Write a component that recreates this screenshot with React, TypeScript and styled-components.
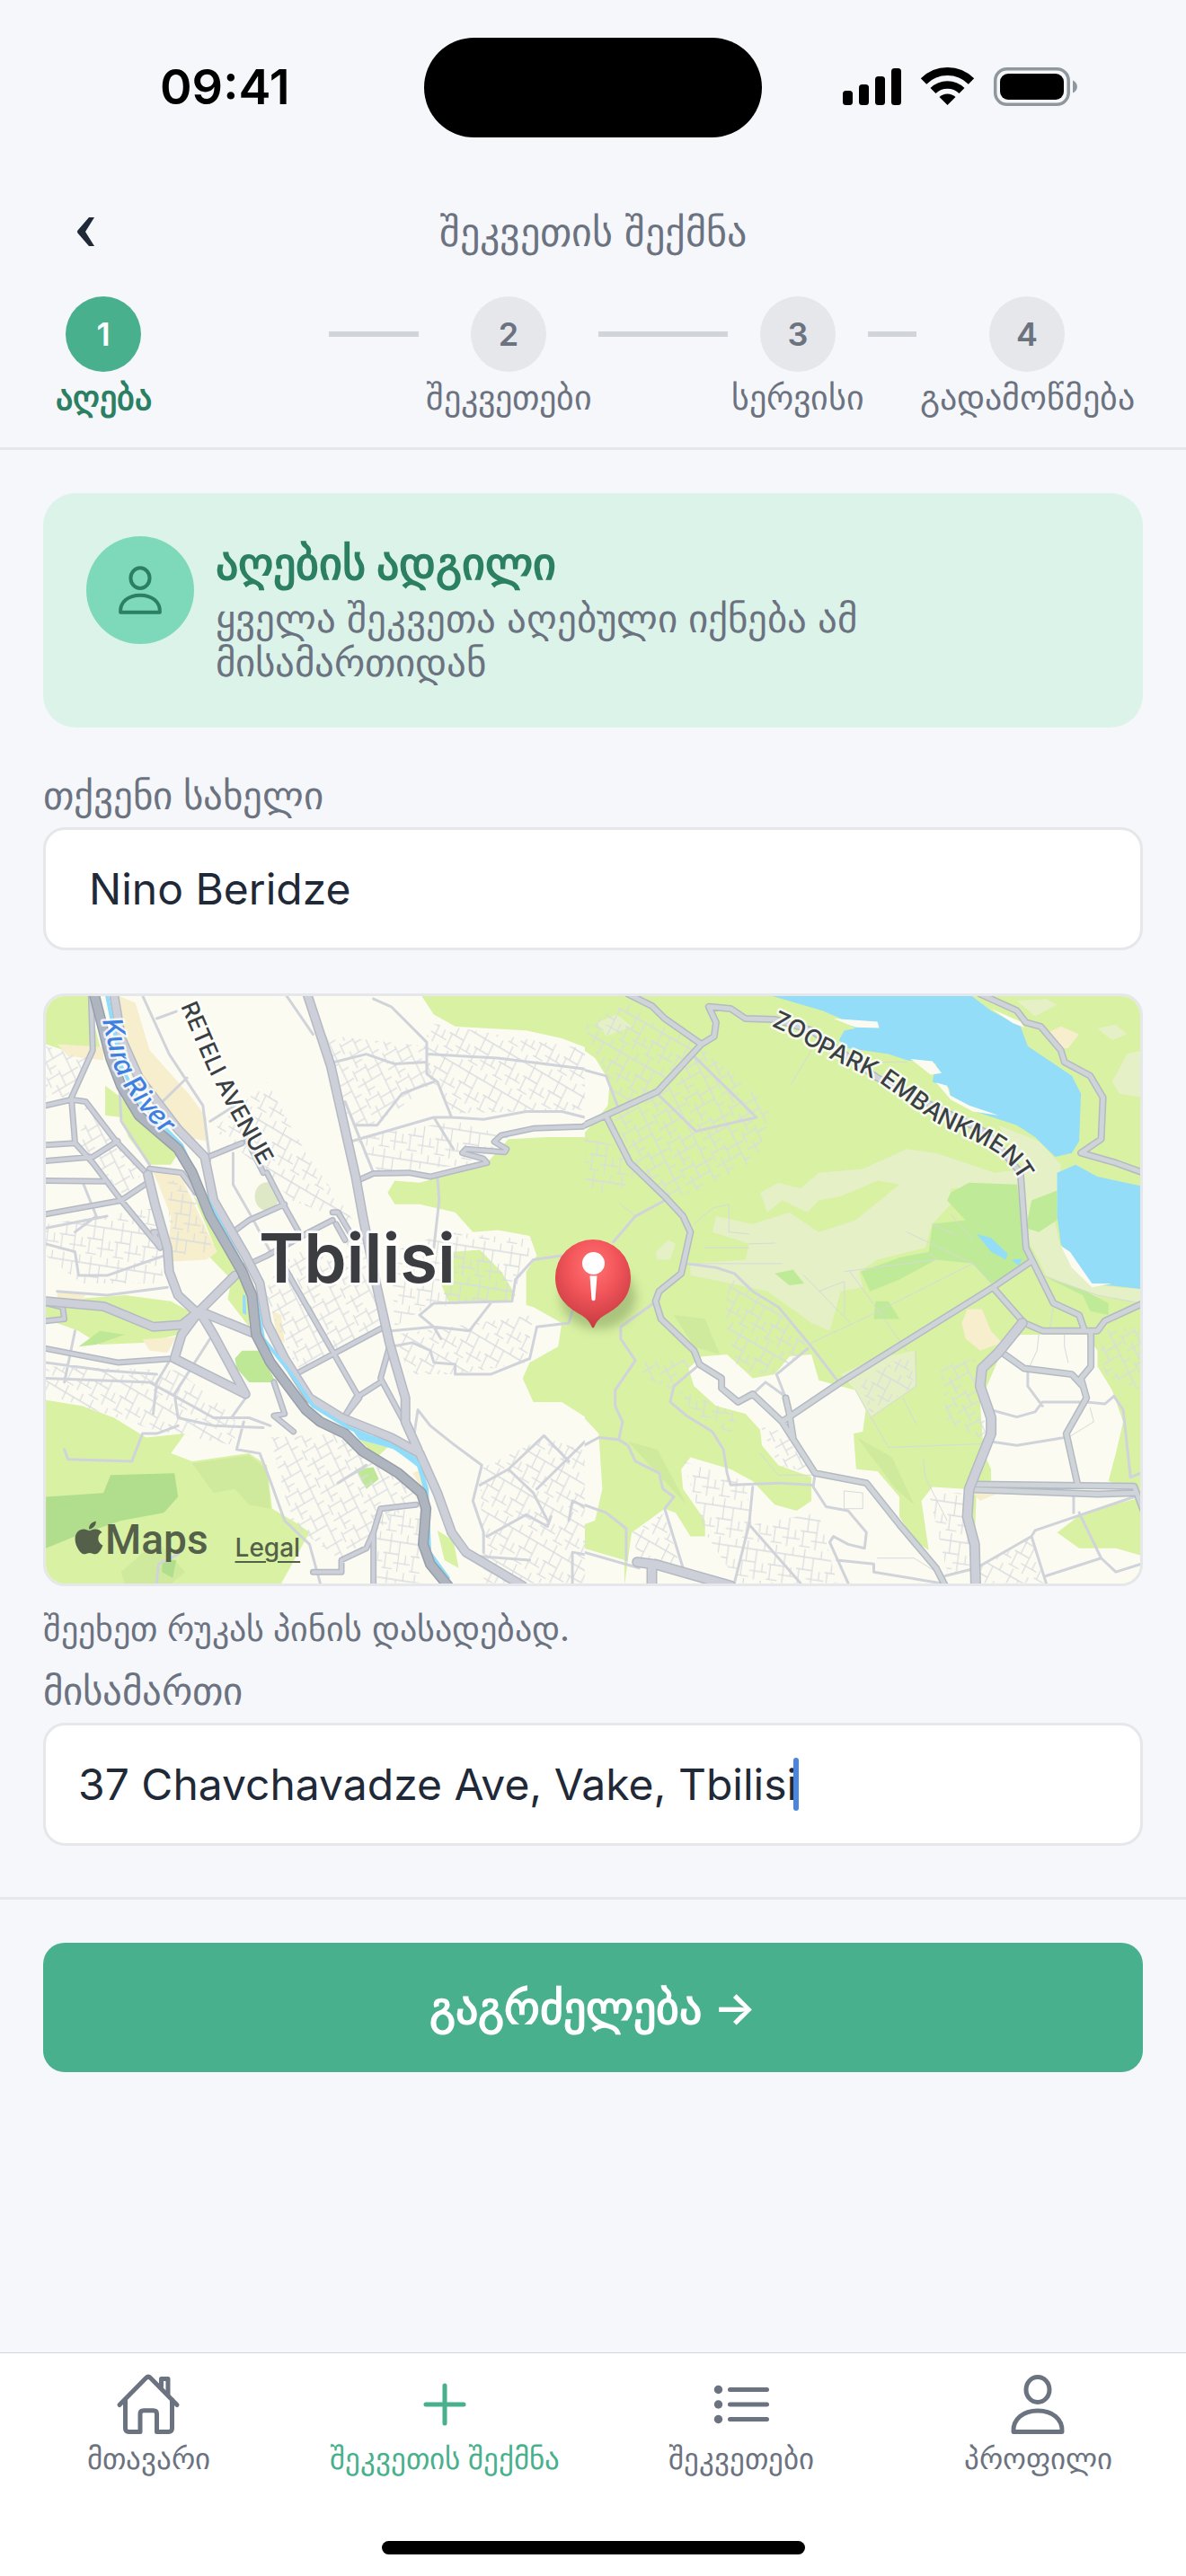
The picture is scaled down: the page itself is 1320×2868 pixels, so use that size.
import React, { useState } from 'react';
import styled, { createGlobalStyle } from 'styled-components';
import { FaApple } from 'react-icons/fa';

const color = {
  page: '#f6f7fb',
  ink: '#1f2937',
  muted: '#6b7280',
  line: '#e5e7eb',
  rail: '#d1d5d9',
  green: '#48b08c',
  greenDark: '#2b7f62',
  greenSoft: '#dcf3ea',
  greenMid: '#7dd9b9',
  white: '#ffffff',
};

const GlobalStyle = createGlobalStyle`
  *, *::before, *::after { box-sizing: border-box; }
  body {
    margin: 0;
    background: ${color.page};
    color: ${color.ink};
    font-family: Inter, sans-serif;
  }
  button, input { font-family: inherit; }
`;

const Screen = styled.div`
  display: flex;
  flex-direction: column;
  min-height: 100vh;
`;

/* ---------- status bar ---------- */

const StatusBar = styled.div`
  display: grid;
  grid-template-columns: 1fr 376px 1fr;
  align-items: center;
  height: 194px;
  color: #000;
`;

const Clock = styled.time`
  margin-left: 178px;
  font-size: 54px;
  font-weight: 600;
  line-height: 64px;
`;

const Island = styled.div`
  height: 111px;
  border-radius: 56px;
  background: #000;
`;

const StatusIcons = styled.svg`
  justify-self: end;
  margin-right: 120px;
`;

/* ---------- header ---------- */

const TitleBar = styled.header`
  display: grid;
  grid-template-columns: 96px 1fr 96px;
  align-items: center;
  height: 128px;
  padding: 0 48px;
`;

const BackButton = styled.button`
  display: flex;
  align-items: center;
  justify-content: center;
  height: 96px;
  padding: 0;
  border: 0;
  background: none;
  color: ${color.ink};
`;

const Title = styled.h1`
  margin: 0;
  text-align: center;
  font-size: 44px;
  font-weight: 400;
  line-height: 54px;
  color: ${color.muted};
`;

const Steps = styled.ol`
  display: flex;
  align-items: flex-start;
  margin: 0;
  padding: 8px 54px 32px 60px;
  border-bottom: 3px solid ${color.line};
  list-style: none;
`;

const StepItem = styled.li<{ $basis: number }>`
  display: flex;
  flex: 0 1 ${p => p.$basis}px;
`;

const StepBody = styled.div<{ $wide: boolean }>`
  display: flex;
  flex-direction: column;
  align-items: center;
  gap: 4px;
  width: ${p => (p.$wide ? '100%' : '110px')};
`;

const StepDot = styled.span<{ $active: boolean }>`
  display: flex;
  align-items: center;
  justify-content: center;
  width: 84px;
  height: 84px;
  border-radius: 50%;
  background: ${p => (p.$active ? color.green : color.line)};
  color: ${p => (p.$active ? color.white : color.muted)};
  font-size: 36px;
  font-weight: 600;
`;

const StepLabel = styled.span<{ $active: boolean }>`
  font-size: 38px;
  font-weight: ${p => (p.$active ? 700 : 400)};
  line-height: 48px;
  white-space: nowrap;
  color: ${p => (p.$active ? color.greenDark : color.muted)};
`;

const StepRail = styled.li<{ $grow: number }>`
  flex: ${p => p.$grow} 1 0;
  height: 6px;
  margin-top: 39px;
  background: ${color.rail};
`;

/* ---------- form ---------- */

const Form = styled.main`
  display: flex;
  flex-direction: column;
  padding: 48px 48px 57px;
`;

const InfoCard = styled.section`
  display: flex;
  align-items: flex-start;
  gap: 24px;
  padding: 48px;
  border-radius: 36px;
  background: ${color.greenSoft};
`;

const Avatar = styled.div`
  display: flex;
  flex: none;
  align-items: center;
  justify-content: center;
  width: 120px;
  height: 120px;
  border-radius: 50%;
  background: ${color.greenMid};
  color: ${color.greenDark};
`;

const InfoText = styled.div`
  display: flex;
  flex-direction: column;
  gap: 7px;
  max-width: 760px;
`;

const InfoTitle = styled.h2`
  margin: 0;
  font-size: 50px;
  font-weight: 700;
  line-height: 60px;
  color: ${color.greenDark};
`;

const InfoBody = styled.p`
  margin: 0;
  font-size: 43px;
  line-height: 49px;
  color: ${color.muted};
`;

const Field = styled.div<{ $gap: number }>`
  display: flex;
  flex-direction: column;
  gap: 9px;
  margin-top: ${p => p.$gap}px;
`;

const FieldLabel = styled.label`
  font-size: 43px;
  line-height: 54px;
  color: ${color.muted};
`;

const InputBox = styled.div<{ $pad: number }>`
  display: flex;
  align-items: center;
  height: 137px;
  padding: 0 ${p => p.$pad}px;
  border: 3px solid ${color.line};
  border-radius: 24px;
  background: ${color.white};
`;

const TextInput = styled.input`
  min-width: 0;
  max-width: 100%;
  field-sizing: content;
  padding: 0;
  border: 0;
  outline: 0;
  background: none;
  color: ${color.ink};
  font-size: 48px;
  line-height: 60px;
`;

const Caret = styled.span`
  flex: none;
  width: 6px;
  height: 59px;
  margin-left: -4px;
  border-radius: 3px;
  background: #4a86e0;
`;

const Hint = styled.p`
  margin: 23px 0 0;
  font-size: 38px;
  line-height: 48px;
  color: ${color.muted};
`;

/* ---------- map ---------- */

const MapFrame = styled.div`
  position: relative;
  height: 660px;
  margin-top: 48px;
  overflow: hidden;
  border: 3px solid ${color.line};
  border-radius: 24px;
  background: #fcfbf2;
`;

const MapCanvas = styled.svg`
  display: block;
  width: 100%;
  height: 100%;
`;

const MapCredit = styled.div`
  position: absolute;
  left: 30px;
  bottom: 22px;
  display: flex;
  align-items: baseline;
  color: #55604a;
`;

const MapBrand = styled.span`
  display: flex;
  align-items: center;
  font-family: Roboto, sans-serif;
  font-size: 46px;
  font-weight: 500;
  line-height: 54px;

  svg {
    width: 36px;
    margin-bottom: 4px;
  }
`;

const MapLegal = styled.a`
  margin-left: 30px;
  color: inherit;
  font-size: 28px;
  font-weight: 500;
  text-underline-offset: 5px;
`;

/* ---------- footer ---------- */

const Actions = styled.div`
  padding: 48px;
  border-top: 3px solid ${color.line};
`;

const PrimaryButton = styled.button`
  width: 100%;
  height: 144px;
  border: 0;
  border-radius: 24px;
  background: ${color.green};
  color: ${color.white};
  font-size: 50px;
  font-weight: 600;
`;

const BottomBar = styled.footer`
  display: flex;
  flex-direction: column;
  align-items: stretch;
  gap: 70px;
  margin-top: auto;
  padding: 15px 0 24px;
  border-top: 1px solid #d1d5db;
  background: ${color.white};
`;

const TabBar = styled.nav`
  display: grid;
  grid-template-columns: repeat(4, 1fr);
`;

const Tab = styled.a<{ $active: boolean }>`
  display: flex;
  flex-direction: column;
  align-items: center;
  color: ${p => (p.$active ? color.green : color.muted)};
  font-size: 33px;
  line-height: 44px;
  text-decoration: none;
  white-space: nowrap;

  svg {
    margin-bottom: -4px;
  }
`;

const HomeIndicator = styled.div`
  align-self: center;
  width: 471px;
  height: 15px;
  border-radius: 8px;
  background: #000;
`;

/* ---------- icons ---------- */

const iconStroke = {
  fill: 'none',
  stroke: 'currentColor',
  strokeWidth: 5,
  strokeLinecap: 'round' as const,
  strokeLinejoin: 'round' as const,
};

const PersonIcon = ({ size = 84 }: { size?: number }) => (
  <svg width={size} height={size} viewBox="0 0 84 84" aria-hidden="true" {...iconStroke}>
    <ellipse cx="42" cy="25.5" rx="13" ry="14" />
    <path d="M15 72.500C14 58 26 49 42 49s28 9 27 23.500z" />
  </svg>
);

const HomeIcon = () => (
  <svg width="84" height="84" viewBox="0 0 84 84" aria-hidden="true" {...iconStroke}>
    <path d="M10 42.500L39.500 12.500Q42 10 44.500 12.500L74 42.500" />
    <path d="M16.500 37V68.500Q16.500 72.500 20.500 72.500H33V52.500Q33 48.700 37 48.700H47.500Q51.500 48.700 51.500 52.500V72.500H64.500Q68.500 72.500 68.500 68.500V37" />
    <path d="M56.500 22V13.500H64V31" />
  </svg>
);

const PlusIcon = () => (
  <svg width="84" height="84" viewBox="0 0 84 84" aria-hidden="true" {...iconStroke}>
    <path d="M42 21V63M21 42H63" />
  </svg>
);

const ListIcon = () => (
  <svg width="84" height="84" viewBox="0 0 84 84" aria-hidden="true" {...iconStroke}>
    <path d="M29.500 25.500H70.500M29.500 42H70.500M29.500 58.500H70.500" />
    <g fill="currentColor" stroke="none">
      <circle cx="16.500" cy="25.500" r="4.700" />
      <circle cx="16.500" cy="42" r="4.700" />
      <circle cx="16.500" cy="58.500" r="4.700" />
    </g>
  </svg>
);

const SignalIcons = () => (
  <StatusIcons width="262" height="46" viewBox="17 14 262 46" role="img" aria-label="signal, wifi, battery">
    <rect x="17" y="41" width="11" height="16" rx="3.500" />
    <rect x="35" y="34" width="11" height="23" rx="3.500" />
    <rect x="53" y="25" width="11" height="32" rx="3.500" />
    <rect x="71" y="16" width="11" height="41" rx="3.500" />
    <g fill="none" stroke="#000">
      <path strokeWidth="9" d="M107 30.500A37.500 37.500 0 0 1 160 30.500" />
      <path strokeWidth="8.500" d="M117.500 41A22.700 22.700 0 0 1 149.500 41" />
    </g>
    <path d="M133.500 57L124.500 48A13 13 0 0 1 142.500 48z" />
    <rect x="186.700" y="16.700" width="81.500" height="39.500" rx="13" fill="none" stroke="#8f989e" strokeWidth="3.500" />
    <rect x="192" y="22" width="71" height="29" rx="9" />
    <path d="M273 29.500C279.500 32 279.500 41 273 43.500z" fill="#8f989e" />
  </StatusIcons>
);

/* ---------- map artwork ---------- */

type Tier = { paths: string[]; edge?: string; fill: string; width: number };

const RoadTier = ({ paths, edge, fill, width }: Tier) => (
  <g fill="none" strokeLinejoin="round" strokeLinecap="round">
    {edge && <path d={paths.join('')} stroke={edge} strokeWidth={width + 3} vectorEffect="non-scaling-stroke" />}
    <path d={paths.join('')} stroke={fill} strokeWidth={width} vectorEffect="non-scaling-stroke" />
  </g>
);

const west = {
  green: [
    'M28 42H150L160 100L190 205L110 190L28 165Z',
    'M195 270L240 300L300 360L400 440L380 470L320 470L260 400L240 350L195 345Z',
    'M1085 42H1568V180L1480 150L1380 130L1180 120L1120 90Z',
    'M990 540L1010 510L1080 515L1180 490L1260 475L1330 405L1440 400L1568 400V1120L1480 1070L1400 1070L1370 1010L1390 970L1470 930L1480 870L1400 830L1380 825V740L1410 700L1390 650L1300 635L1230 640L1180 590L1080 570L1010 570Z',
    'M1175 690L1250 685L1310 740L1350 800L1330 815H1160L1140 770Z',
    'M28 815L250 800L380 815L450 850L400 900L300 920L180 925L120 890L28 860Z',
    'M28 1065L130 1080L220 1110L310 1160L420 1150L380 1200L440 1220L600 1200L650 1230L665 1340L740 1380L770 1400L690 1530H28Z',
    'M440 540L480 600L600 760L600 880L540 810L550 760L485 700L500 670Z',
    'M910 1165L990 1185L960 1210Z',
    'M1130 1395L1175 1420L1190 1490L1150 1470Z',
  ],
  shade: [
    'M440 1225L600 1205L650 1240L660 1340L600 1330L560 1290L500 1300Z',
    'M240 1500L340 1420L420 1500L380 1530H250Z',
  ],
  park: [
    'M560 960L580 940L630 940L675 1020L600 1020L565 985Z',
    'M900 1240L950 1235L965 1265L930 1290Z',
    'M120 930L180 890L250 900L170 925Z',
  ],
  forest: [
    'M28 1310L190 1300L210 1255L390 1250L400 1310L360 1350L240 1370L110 1410L28 1440Z',
    'M355 1470L395 1470L385 1515L355 1500Z',
  ],
  sand: [
    'M230 42L280 60L320 180L430 290L480 350L480 410L420 400L330 320L270 260L250 150Z',
    'M330 490L400 480L430 540L510 690L480 710L370 715L380 600L345 520Z',
    'M665 840L690 850L700 920L680 910Z',
    'M300 912L395 905L370 945L320 940Z',
    'M60 165L190 172L190 205L90 195Z',
    'M60 790L140 795L130 815L60 815Z',
    'M1060 1250L1085 1240L1095 1300Z',
  ],
  water: ['M890 1140L1000 1170L1080 1215L1105 1290L1090 1290L1075 1235L1010 1190L910 1165Z', 'M582 800L590 800L592 850L582 845Z'],
  major: [
    'M220 42L240 150L290 250L400 380L475 450L500 560L590 700L630 770L650 870L700 960L770 1060L860 1110L1000 1160L1080 1200L1130 1300L1170 1400L1210 1450L1370 1535',
    'M765 42L830 220L900 500L920 600L960 780L995 920L1040 1060L1040 1120L1075 1190',
    'M28 815L190 828L330 880L410 875L460 840L610 895',
    'M460 850L400 800L375 740L370 680L335 570L315 495',
    'M460 840L560 750',
    'M390 960L410 900L460 840L500 900L590 1050L390 960',
  ],
  street: [
    'M995 930L970 1010L1060 1160M970 1020L900 1060L870 1105',
    'M315 495L225 410L140 310L100 305L28 320',
    'M390 960L230 970L28 935M28 420L110 415L160 465L240 560L350 680',
    'M28 460L160 450L230 410M28 510L190 512M28 595L240 560L315 515',
    'M100 305L110 415M155 42L160 180L100 300M320 480L410 490L450 540',
    'M670 1020L700 1100L670 1105L725 1145',
    'M590 725L650 700L770 640L835 610M835 590L850 590L890 650M845 620L870 660',
    'M485 450L580 415M28 865L80 860L75 830L28 820M330 640L350 640V675Z',
    'M555 640L600 610L700 570M650 490L690 560L740 640M640 490L590 400',
    'M700 730L840 950L910 1060M740 995L980 880M910 1060L875 1100',
    'M905 510L950 492L1050 490L1110 500L1200 480L1270 465L1260 455L1200 440L1210 430L1320 438L1325 430L1290 412L1310 395L1400 378L1540 373L1568 360',
    'M1070 1330L970 1340L950 1400V1528M950 1400L930 1440L860 1470V1500H780',
  ],
  lane: [
    'M300 42L375 190L470 320L490 460M340 100L395 82M345 320L425 250M490 360L560 320',
    'M555 440V520L600 590L660 690',
    'M705 42L780 140M950 50L1000 70L1100 160V240L1130 260L1170 350L1260 355L1380 335L1480 335L1568 355',
    'M1100 190L1300 200L1568 230M840 210L930 190L1010 215L1100 210M890 410L1120 350L1170 350',
    'M900 370L960 370L1030 290L1120 260M870 310L950 490M1120 350L1175 430M1130 500L1135 560L1120 680',
    'M1000 890L1120 880L1220 890L1280 820M1000 930L1060 920L1110 940L1120 970L1180 975V1000L1280 1000L1390 960L1410 880L1500 870L1510 840',
    'M1140 910L1120 880L1080 850L1120 820L1340 815L1350 760L1400 710L1480 700',
    'M1075 1090L1110 1130L1180 1180L1255 1230L1230 1320L1260 1400V1450M1075 1090L1065 1150',
    'M1250 1280L1330 1240L1430 1155L1500 1220M1410 1290L1568 1150M1330 1240L1400 1300L1440 1370',
    'M565 1190L630 1200L660 1270L700 1370L770 1430L800 1528M565 1190L585 1120',
    'M80 1190L90 1215L270 1220L300 1150L340 1150L400 1130M330 1100L340 1020L380 960',
    'M28 1010L320 1020L500 1110L600 1110L660 1130M28 970L190 990L340 1000M490 910L390 1050L400 1110L500 1130L640 1135',
    'M28 630L200 600M28 670L110 690L120 750L200 750L360 700M60 790L200 800L370 780',
    'M235 270L240 360L320 470M110 640L170 600L130 510M80 1020L110 890',
    'M340 1528L345 1480L400 1455M1270 1410L1380 1355L1440 1385L1450 1360M1240 1460L1390 1470M1510 1528V1450L1568 1460M1500 1370L1510 1320L1568 1345',
    'M550 1110L590 1060M850 1275L930 1230',
  ],
  hatch: [
    'M1100 110L1568 180V330L1180 340L1100 240Z',
    'M790 140L1100 170L1120 260L960 370H880Z',
    'M900 400L1180 360L1330 400L1220 470L950 490Z',
    'M500 380L650 260L760 440L900 620L720 560L650 490Z',
    'M700 700L930 650L980 880L740 995L640 800Z',
    'M1000 690L1160 640L1400 660L1380 720L1340 810L1100 830L1010 880Z',
    'M1010 900L1400 850L1380 970L1190 1000L1050 1000Z',
    'M660 1160L860 1150L1080 1310L950 1400L860 1470L720 1380Z',
    'M960 1350L1080 1340V1528H960Z',
    'M1250 1240L1430 1160L1568 1200V1528H1260Z',
    'M28 170L150 200L100 300H28Z',
    'M28 620L330 580L360 770H130L28 700Z',
    'M28 980L400 990L560 1110L560 1180L330 1140L28 1050Z',
    'M140 320L300 490L250 550L120 420Z',
    'M370 500L440 540L500 690L380 700Z',
  ],
};

const east = {
  cream: [
    'M0 180L30 200L70 260L65 320L30 360L0 390Z',
    'M285 985L320 955L390 950L460 1010L520 1000L560 955L620 950L640 1015L740 1040L768 1090L760 1145L735 1150L742 1240L800 1245L860 1310V1360L900 1420L940 1445L920 1320L950 1285L1040 1290L1080 1535H110L130 1400L220 1340L250 1350L290 1410L330 1410V1370L270 1290L265 1240L290 1210L400 1240L460 1270L520 1330L580 1345L620 1320V1260L530 1230L485 1180L480 1140L440 1100L360 1080L300 1030Z',
    'M1080 1070L1140 940L1190 900H1370L1400 940V980L1440 1040L1470 1120L1450 1200L1430 1270L1525 1300V1535H1060L1070 1300L1110 1270V1240L1090 1200Z',
    'M0 1110L40 1150L50 1290L30 1370L0 1380Z',
    'M0 1440L110 1470V1535H0Z',
  ],
  green: ['M1360 1350L1525 1310V1460L1450 1440H1350L1290 1400Z'],
  shade: ['M245 850L330 860L370 950L300 930Z', 'M120 1170L200 1190L280 1330L240 1290Z', 'M745 1160L840 1210L900 1330L850 1290Z'],
  pale: [
    'M480 540L530 515L590 530L640 490L760 480L880 430L960 440L1120 490L1200 480L1130 370L1240 410L1300 470L1285 620L1300 680L1390 775L1525 785V820L1380 800L1260 750L1200 640V520L1000 530V570L950 620L930 680L800 710L750 740L760 780L700 790L670 890L620 870L560 830L500 790L400 770L290 750V720L440 710L450 670L350 640L360 600L460 620L560 590L640 640L740 610L860 520L800 510L700 550L640 560L610 590L540 560L500 590Z',
    'M1440 260L1480 190L1525 180V300L1460 290Z',
    'M1400 125L1450 115L1480 140L1440 155Z',
    'M35 110L90 90L130 120L60 145Z',
    'M1180 55L1260 50L1290 65L1230 95Z',
    'M700 1000L780 965L900 940L905 1030L780 1110L740 1040Z',
    'M195 690L230 660L250 670L235 710L200 710Z',
  ],
  park: [
    'M1000 540L1050 515L1180 520L1200 650L1220 720L1110 770L1060 720L960 710L860 760L780 790L755 740L860 705L940 690L950 620L1040 610L990 560Z',
    'M1220 560L1290 535V610L1240 640L1205 630Z',
    'M520 745L570 735L600 770L560 775Z',
    'M795 815L830 815L860 860L790 860Z',
    'M1260 755L1370 790L1430 820V850L1380 840L1360 800Z',
  ],
  sand: [
    'M1030 870L1045 835L1085 835L1110 890L1140 920L1080 940L1040 910Z',
    'M1265 135L1300 120L1350 140L1320 175L1290 175Z',
    'M1060 1300L1130 1300L1080 1320Z',
  ],
  water: [
    'M495 38H1050L1110 80L1190 120L1210 170L1330 245L1355 290L1350 410L1330 440L1285 450L1230 400L1180 370L1050 330L1000 300L995 275L950 260L960 215L880 205L830 190L720 175L695 155L710 130L740 125L700 100L650 80Z',
    'M1290 490L1340 470L1400 500L1525 525V785L1430 775H1385L1330 720L1300 670L1290 600Z',
    'M1070 645L1110 655L1155 695L1150 710L1110 690Z',
    'M1165 710L1195 708L1185 725Z',
  ],
  beach: [
    'M680 100L800 108L805 124L740 122Z',
    'M890 202L950 208L975 238L945 242Z',
    'M960 262L990 270L998 294L1050 320L1130 345L1060 335L1000 305Z',
    'M1110 75L1190 108L1200 122L1170 112Z',
    'M1300 675L1325 690L1385 770H1440L1385 780L1330 730Z',
  ],
  major: [
    'M1195 870L1130 945L1085 985L1080 1030L1110 1110V1150L1050 1290L1045 1360L1065 1430L1068 1535',
    'M145 1475L200 1482L400 1535M185 1485V1535',
  ],
  street: [
    'M120 38L185 68L220 100L320 165L355 145L360 110L340 70L400 75L440 100L520 102L620 130L800 250L1100 390L1190 490L1205 680L1280 820L1350 850L1365 890',
    'M320 165L200 285L95 330L0 370M62 350L125 465L220 550L270 600L290 640L265 745L205 790L195 815L210 860L300 940L315 975L375 1010V1035L420 1070L460 1050L540 1120L630 1250L770 1275L860 1380L960 1490L985 1535',
    'M540 1120L700 1020L1115 780L1218 715M1115 780L1200 870M560 1100L570 1160M550 1060L560 1100',
    'M1080 38L1180 80L1205 110L1245 120L1300 180L1310 210L1380 245L1415 300L1410 405L1355 440L1450 465L1525 490',
    'M1200 870L1250 890H1400L1420 865L1525 820M1382 890V980L1355 1010L1370 1060L1315 1150L1345 1275M1140 945L1200 985L1330 1000L1360 1030',
    'M1065 1278L1500 1283L1525 1345M1065 1292L1400 1303L1500 1300',
  ],
  lane: [
    'M280 720L360 730L410 745L460 790L530 830L620 930L690 1015',
    'M80 665L140 600L220 560M205 810L100 880V910L140 965L85 1040V1080L105 1120L95 1165L120 1180L140 1220L205 1250L215 1290L245 1310L220 1340L270 1490',
    'M0 1180L40 1160L95 1165M315 975L245 1030L235 1070L280 1105L350 1145L380 1190L390 1250L400 1280L530 1275L620 1280',
    'M630 1250L625 1285L660 1335L720 1345L770 1400L765 1440L720 1430L680 1410L670 1425L720 1528',
    'M550 1060L525 1000L610 935M460 1050L495 1020L555 1060M460 1285L450 1380L410 1528M450 1380L590 1528',
    'M1110 1090L1180 1108L1230 1095L1250 1070L1370 1070L1420 1075L1445 1055L1470 1090L1490 1260L1518 1250',
    'M1210 990V1030L1250 1080M1110 1170L1180 1180L1310 1160M1070 1490L1220 1410L1230 1395L1500 1310M1220 1410L1260 1528',
    'M1350 1350L1410 1465L1260 1510M1410 1465L1450 1500L1518 1480M985 1510L1070 1490M1335 1300V1350',
    'M690 1470L790 1480V1500L970 1528M0 1330L60 1350L115 1390V1470M300 195L470 350L305 385L200 290M0 230L60 245L95 330M0 1450L150 1490',
  ],
  thin: [
    'M300 620L350 580L395 570V640L450 645M330 680H450M450 670L520 668M300 720H540',
    'M600 750L725 870M725 740L880 940M640 790L710 765V850M710 740L960 710M960 710L940 690',
    'M620 920L760 860L1060 720M880 640L1060 720L1110 770M950 620L1020 650M1000 595L1060 660',
    'M740 1040L830 1185L1110 1175M870 1060L905 1125M905 940V1030L780 1110M620 180L565 265M720 210H880',
    'M925 1215L930 1260L990 1370M710 1295L760 1300V1340L710 1340ZM800 1465H900L960 1500M1280 820L1270 890M1250 750L1400 800L1518 820',
    'M1310 900V930L1320 970M1240 900L1235 940L1210 990M1380 1085L1390 1120L1320 1160M100 570L140 600M480 1200L530 1255H620',
  ],
  hatch: [
    'M0 120L120 60L190 110L320 165L200 285L95 330L60 240Z',
    'M200 285L320 170L510 330L470 460L300 540L220 550L125 465L70 350Z',
    'M0 400L80 420L160 490L70 550L0 520Z',
    'M400 755L520 830L610 930L520 1000L420 990L380 850Z',
    'M140 970L300 960L240 1040L170 1010Z',
    'M270 1220L440 1270L460 1400L600 1528H420L330 1400Z',
    'M130 1400L220 1350L260 1480L150 1470Z',
    'M480 1130L560 1150L620 1250L530 1230Z',
    'M460 1380L640 1350L690 1528H590Z',
    'M750 1010L890 950L900 1030L780 1100Z',
    'M970 980L1070 960L1100 1170L990 1120Z',
    'M940 1300L1030 1300L1060 1500L990 1500Z',
    'M1070 1490L1220 1410L1260 1528H1080Z',
    'M1400 890L1518 880V1040L1420 1000Z',
    'M260 1040L420 1100L400 1150L300 1100Z',
  ],
};

const roadColor = { edge: '#b4bac4', fill: '#cdcfd9', river: '#afb5bf', riverEdge: '#979eaa', lane: '#d0d4da' };

const MapLabel = styled.text<{ $size: number; $fill: string; $italic?: boolean }>`
  font-family: Inter, sans-serif;
  font-size: ${p => p.$size}px;
  font-style: ${p => (p.$italic ? 'italic' : 'normal')};
  font-weight: 500;
  fill: ${p => p.$fill};
  stroke: rgba(255, 255, 255, 0.8);
  stroke-width: 5px;
  stroke-linejoin: round;
  paint-order: stroke;
`;

const CityLabel = styled(MapLabel)`
  font-weight: 600;
  stroke-width: 6px;
`;

const HatchAreas = ({ areas, prefix }: { areas: string[]; prefix: string }) => (
  <g>
    {areas.map((d, i) => (
      <path key={d} d={d} fill={`url(#${prefix}${i % 3})`} />
    ))}
  </g>
);

const CityMap = () => (
  <MapCanvas viewBox="3 3 1218 654" preserveAspectRatio="xMidYMid slice" role="img" aria-label="Tbilisi">
    <defs>
      {[28, 62, 8].map((angle, i) => (
        <pattern
          key={angle}
          id={`blocks${i}`}
          width="78"
          height="96"
          patternUnits="userSpaceOnUse"
          patternTransform={`rotate(${angle})`}
        >
          <path
            d="M0 20H78M0 52H44M30 74H78M0 90H30M18 0V52M44 20V96M64 0V20M64 52V74M8 52V90"
            fill="none"
            stroke="#d9dce0"
            strokeWidth="3"
          />
        </pattern>
      ))}
      <clipPath id="eastHalf">
        <rect x="2" y="30" width="1540" height="1520" />
      </clipPath>
      <radialGradient id="pinFill" cx="0.5" cy="0.3" r="0.7">
        <stop offset="0" stopColor="#ff7474" />
        <stop offset="0.45" stopColor="#f3565b" />
        <stop offset="1" stopColor="#c53a40" />
      </radialGradient>
      <filter id="pinShadow" x="-50%" y="-50%" width="200%" height="200%">
        <feGaussianBlur stdDeviation="6" />
      </filter>
      <path id="riverPath" d="M66 30L77 78L90 104L112 134L170 196" />
      <path id="avenuePath" d="M153 14L184 86L210 136L266 236" />
      <path id="embankmentPath" d="M810 36Q842 50 863 66L928 97L994 144L1052 172Q1080 186 1098 230" />
    </defs>

    <g transform="matrix(0.3954 0 0 0.4401 -8 -16)">
      <rect x="0" y="30" width="1600" height="1520" fill="#fcfbf2" />
      <path d={west.green.join('')} fill="#d8f1a3" />
      <path d={west.shade.join('')} fill="#cfea9d" />
      <path d={west.park.join('')} fill="#bfe896" />
      <path d={west.forest.join('')} fill="#b0de8c" />
      <path d={west.sand.join('')} fill="#f6eecd" />
      <ellipse cx="650" cy="550" rx="34" ry="36" fill="#dfe8c6" />
      <path d={west.water.join('')} fill="#93ddf9" />
      <HatchAreas areas={west.hatch} prefix="blocks" />
      <RoadTier paths={west.lane} fill={roadColor.lane} width={3} />
      <RoadTier paths={west.street} edge={roadColor.edge} fill={roadColor.fill} width={4} />
      <RoadTier paths={west.major} edge={roadColor.edge} fill={roadColor.fill} width={8} />
      <RoadTier
        paths={['M200 42L240 220L290 310L410 420L450 500L590 740L620 810L640 910L720 1000L780 1080L880 1135L1000 1180L1075 1225L1100 1290L1108 1450L1160 1515']}
        fill="#8fdcfb"
        width={4}
      />
      <RoadTier
        paths={['M165 42L210 200L240 270L290 345L400 430L440 490L490 600L580 740L608 800L620 900L660 970L760 1090L800 1120L870 1150L920 1195L1020 1250L1085 1300L1098 1340L1090 1430L1110 1480L1160 1535']}
        edge={roadColor.riverEdge}
        fill={roadColor.river}
        width={9}
      />
    </g>

    <g transform="matrix(0.4082 0 0 0.4401 602 -16)" clipPath="url(#eastHalf)">
      <rect x="2" y="30" width="1540" height="1520" fill="#d8f1a3" />
      <path d={east.shade.join('')} fill="#cfea9d" />
      <path d={east.cream.join('')} fill="#fcfbf2" />
      <path d={east.green.join('')} fill="#d8f1a3" />
      <path d={east.pale.join('')} fill="#e5f0c6" />
      <path d={east.park.join('')} fill="#bfea97" />
      <path d={east.sand.join('')} fill="#f6eecd" />
      <path d={east.water.join('')} fill="#93ddf9" />
      <path d={east.beach.join('')} fill="#fcfbf2" />
      <HatchAreas areas={east.hatch} prefix="blocks" />
      <RoadTier paths={east.thin} fill="#d6dad9" width={1} />
      <RoadTier paths={east.lane} fill={roadColor.lane} width={3} />
      <RoadTier paths={east.street} edge={roadColor.edge} fill="#cfd4d8" width={5} />
      <RoadTier paths={east.major} edge={roadColor.edge} fill={roadColor.fill} width={9} />
    </g>

    <MapLabel $size={30} $fill="#3f7fe0" $italic>
      <textPath href="#riverPath">Kura River</textPath>
    </MapLabel>
    <MapLabel $size={26} $fill="#3a3f42">
      <textPath href="#avenuePath">RETELI AVENUE</textPath>
    </MapLabel>
    <MapLabel $size={27} $fill="#3a3f42">
      <textPath href="#embankmentPath">ZOOPARK EMBANKMENT</textPath>
    </MapLabel>
    <CityLabel $size={76} $fill="#3b3d40" x="240" y="322">
      Tbilisi
    </CityLabel>

    <ellipse cx="618" cy="338" rx="42" ry="36" fill="#55703a" opacity="0.35" filter="url(#pinShadow)" />
    <path
      d="M612 274a42 42 0 0 1 42 42c0 22-13 33-27 41c-7 4-11 8-13 13q-2 5-4 0c-2-5-6-9-13-13c-14-8-27-19-27-41a42 42 0 0 1 42-42z"
      fill="url(#pinFill)"
    />
    <circle cx="612.5" cy="300.500" r="12.500" fill="#fff" />
    <path d="M608.500 314.500H616.500L614.500 341Q612.500 343.500 610.500 341Z" fill="#fff" />
  </MapCanvas>
);

/* ---------- screen ---------- */

const steps = [
  { label: 'აღება', basis: 306, rail: 100 },
  { label: 'შეკვეთები', basis: 200, rail: 144 },
  { label: 'სერვისი', basis: 156, rail: 54 },
  { label: 'გადამოწმება', basis: 246, rail: 0 },
];

const tabs = [
  { label: 'მთავარი', Icon: HomeIcon },
  { label: 'შეკვეთის შექმნა', Icon: PlusIcon },
  { label: 'შეკვეთები', Icon: ListIcon },
  { label: 'პროფილი', Icon: PersonIcon },
];

export default function App() {
  const [name, setName] = useState('Nino Beridze');
  const [address, setAddress] = useState('37 Chavchavadze Ave, Vake, Tbilisi');

  return (
    <Screen>
      <GlobalStyle />
      <StatusBar>
        <Clock>09:41</Clock>
        <Island />
        <SignalIcons />
      </StatusBar>

      <TitleBar>
        <BackButton type="button" aria-label="უკან">
          <svg width="24" height="36" viewBox="0 0 24 36" aria-hidden="true">
            <path d="M15 2H21L11 18L21 34H15L2.500 19.500Q1.500 18 2.500 16.500Z" fill="currentColor" />
          </svg>
        </BackButton>
        <Title>შეკვეთის შექმნა</Title>
      </TitleBar>

      <Steps>
        {steps.map((step, i) => (
          <React.Fragment key={step.label}>
            <StepItem $basis={step.basis} aria-current={i === 0 ? 'step' : undefined}>
              <StepBody $wide={i > 0}>
                <StepDot $active={i === 0}>{i + 1}</StepDot>
                <StepLabel $active={i === 0}>{step.label}</StepLabel>
              </StepBody>
            </StepItem>
            {step.rail > 0 && <StepRail $grow={step.rail} aria-hidden="true" />}
          </React.Fragment>
        ))}
      </Steps>

      <Form>
        <InfoCard>
          <Avatar>
            <PersonIcon size={68} />
          </Avatar>
          <InfoText>
            <InfoTitle>აღების ადგილი</InfoTitle>
            <InfoBody>ყველა შეკვეთა აღებული იქნება ამ მისამართიდან</InfoBody>
          </InfoText>
        </InfoCard>

        <Field $gap={48}>
          <FieldLabel htmlFor="name">თქვენი სახელი</FieldLabel>
          <InputBox $pad={48}>
            <TextInput id="name" value={name} onChange={e => setName(e.target.value)} />
          </InputBox>
        </Field>

        <MapFrame>
          <CityMap />
          <MapCredit>
            <MapBrand>
              <FaApple size={42} aria-hidden="true" />
              Maps
            </MapBrand>
            <MapLegal href="#legal">Legal</MapLegal>
          </MapCredit>
        </MapFrame>
        <Hint>შეეხეთ რუკას პინის დასადებად.</Hint>

        <Field $gap={18}>
          <FieldLabel htmlFor="address">მისამართი</FieldLabel>
          <InputBox $pad={36}>
            <TextInput id="address" value={address} onChange={e => setAddress(e.target.value)} />
            <Caret />
          </InputBox>
        </Field>
      </Form>

      <Actions>
        <PrimaryButton type="button">გაგრძელება →</PrimaryButton>
      </Actions>

      <BottomBar>
        <TabBar>
          {tabs.map(({ label, Icon }, i) => (
            <Tab key={label} href={`#tab-${i}`} $active={i === 1}>
              <Icon />
              {label}
            </Tab>
          ))}
        </TabBar>
        <HomeIndicator />
      </BottomBar>
    </Screen>
  );
}
